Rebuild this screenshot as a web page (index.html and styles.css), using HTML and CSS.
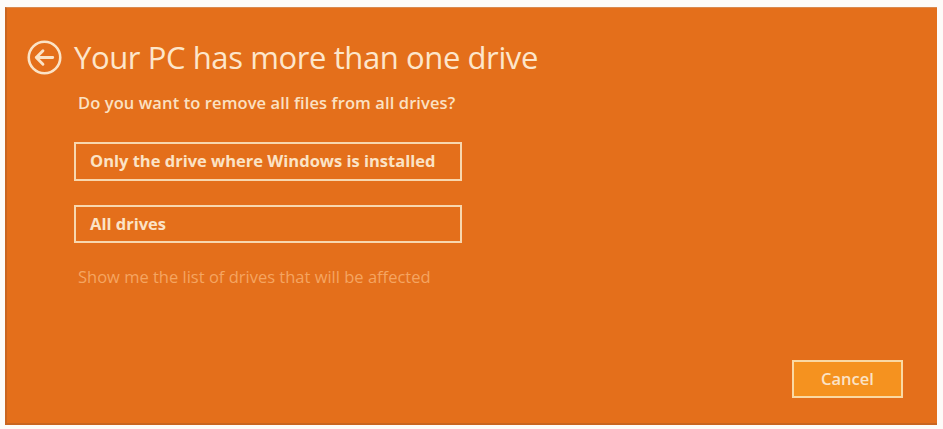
FILE: index.html
```html
<!DOCTYPE html>
<html>
<head>
<meta charset="utf-8">
<link rel="stylesheet" href="styles.css">
</head>
<body>
<div class="panel">
  <div class="header">
    <svg class="back" width="35" height="35" viewBox="0 0 34 34">
      <circle cx="17" cy="17" r="15.3" fill="none" stroke="#fbe3c6" stroke-width="2.5"/>
      <path d="M9 17 H25 M9 17 L15.5 10.5 M9 17 L15.5 23.5" fill="none" stroke="#fbe3c6" stroke-width="2.8" stroke-linecap="round" stroke-linejoin="round"/>
    </svg>
    <h1 class="title">Your PC has more than one drive</h1>
  </div>
  <div class="content">
    <p class="question">Do you want to remove all files from all drives?</p>
    <button class="option">Only the drive where Windows is installed</button>
    <button class="option">All drives</button>
    <p class="link">Show me the list of drives that will be affected</p>
  </div>
  <div class="footer">
    <button class="cancel">Cancel</button>
  </div>
</div>
</body>
</html>
```
FILE: styles.css
```css
html, body {
  margin: 0;
  padding: 0;
  background: #fdfbf8;
}
.panel {
  box-sizing: border-box;
  margin: 7px 0 0 5px;
  width: 932px;
  height: 418px;
  background: #e46f1b;
  border-left: 2px solid #c9651f;
  border-bottom: 2px solid #c9651f;
  border-top: 1px solid #d98a4f;
  display: flex;
  flex-direction: column;
  font-family: "Open Sans", "Noto Sans", sans-serif;
  color: #fbe3c6;
}
.header {
  display: flex;
  align-items: center;
  padding: 31px 0 0 20px;
  gap: 12px;
}
.back {
  flex: none;
}
.title {
  margin: 0;
  font-weight: 400;
  font-size: 31px;
  line-height: 36px;
  letter-spacing: -0.4px;
  color: #fde6cb;
}
.content {
  display: flex;
  flex-direction: column;
  align-items: flex-start;
  padding: 16px 0 0 67px;
}
.question {
  margin: 0 0 0 4px;
  font-size: 16.5px;
  font-weight: 600;
  line-height: 24px;
  letter-spacing: 0.1px;
  color: #fbe1c2;
}
.option {
  box-sizing: border-box;
  width: 388px;
  height: 39px;
  margin-top: 27px;
  border: 2px solid #f8d7ae;
  background: transparent;
  font-family: inherit;
  font-size: 16.5px;
  font-weight: 700;
  color: #fbe3c6;
  text-align: left;
  padding: 0 0 2px 14px;
}
.option + .option {
  margin-top: 24px;
  height: 38px;
}
.link {
  margin: 23px 0 0 4px;
  font-size: 16.5px;
  line-height: 22px;
  color: #f5a561;
}
.footer {
  margin-top: auto;
  display: flex;
  justify-content: flex-end;
  padding: 0 34px 25px 0;
}
.cancel {
  box-sizing: border-box;
  width: 111px;
  height: 38px;
  background: #f5921f;
  border: 2px solid #fad9a3;
  font-family: inherit;
  font-size: 16.5px;
  font-weight: 600;
  color: #fbe3c6;
  padding: 0 0 2px 0;
}
```
